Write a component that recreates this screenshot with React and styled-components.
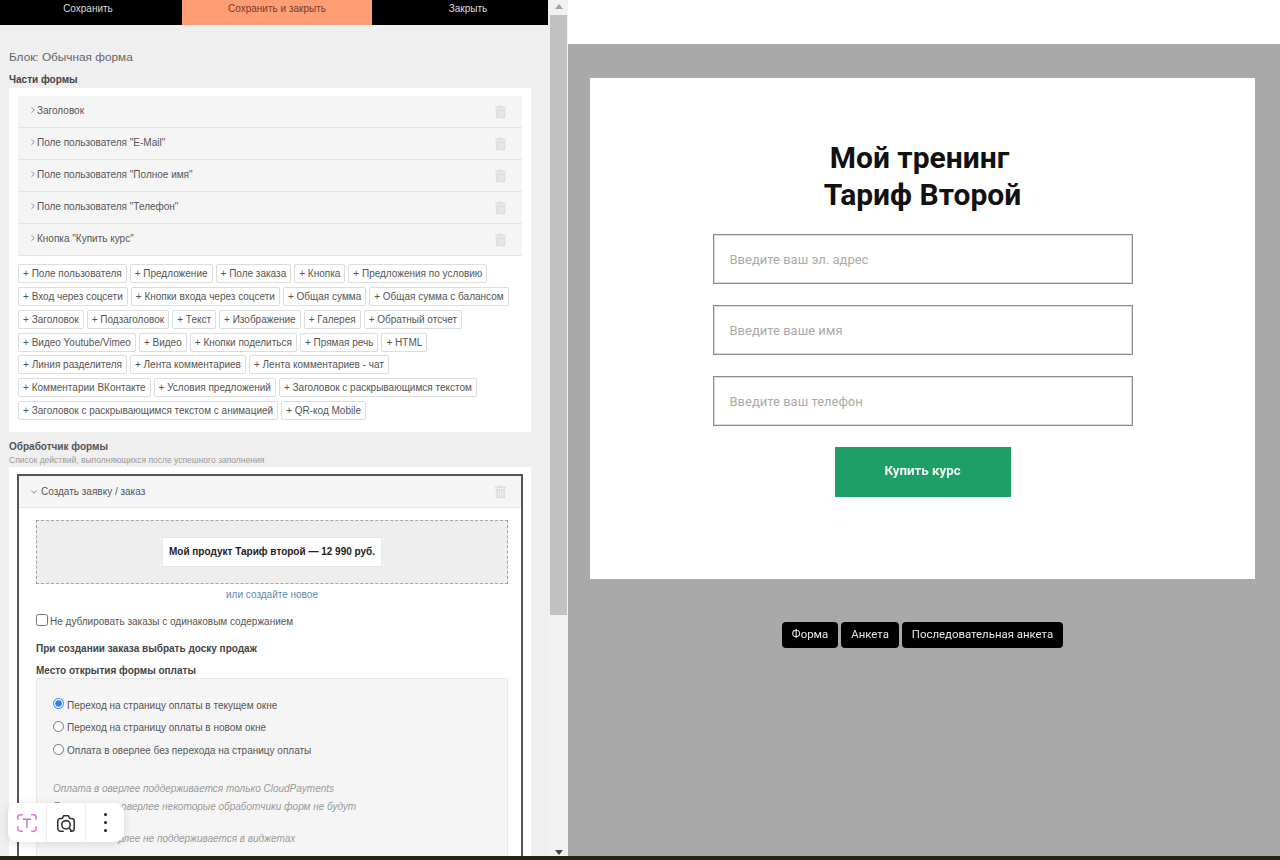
import React from 'react';
import styled, { createGlobalStyle } from 'styled-components';
import { FaTrashAlt } from 'react-icons/fa';
import { LuChevronRight, LuChevronDown } from 'react-icons/lu';

const GlobalStyle = createGlobalStyle`
    html, body {
        margin: 0;
        padding: 0;
        height: 860px;
        overflow: hidden;
        background: #2a2117;
    }
    * {
        box-sizing: border-box;
    }
`;

const parts = ['Заголовок', 'Поле пользователя "E-Mail"', 'Поле пользователя "Полное имя"', 'Поле пользователя "Телефон"', 'Кнопка "Купить курс"'];

const tags = [
    'Поле пользователя', 'Предложение', 'Поле заказа', 'Кнопка', 'Предложения по условию',
    'Вход через соцсети', 'Кнопки входа через соцсети', 'Общая сумма', 'Общая сумма с балансом',
    'Заголовок', 'Подзаголовок', 'Текст', 'Изображение', 'Галерея', 'Обратный отсчет',
    'Видео Youtube/Vimeo', 'Видео', 'Кнопки поделиться', 'Прямая речь', 'HTML',
    'Линия разделителя', 'Лента комментариев', 'Лента комментариев - чат',
    'Комментарии ВКонтакте', 'Условия предложений', 'Заголовок с раскрывающимся текстом',
    'Заголовок с раскрывающимся текстом с анимацией', 'QR-код Mobile',
];

const App = () => {
    return (
        <Page>
            <GlobalStyle />
            <Main>
                <Editor>
                    <Toolbar>
                        <ToolButton $right={6}>Сохранить</ToolButton>
                        <ToolButton $active>Сохранить и закрыть</ToolButton>
                        <ToolButton $left={16}>Закрыть</ToolButton>
                    </Toolbar>

                    <BlockTitle>Блок: Обычная форма</BlockTitle>
                    <SectionTitle>Части формы</SectionTitle>
                    <Panel>
                        {parts.map((part) => (
                            <PartRow key={part}>
                                <RightArrow size={10} />
                                <PartName>{part}</PartName>
                                <Trash />
                            </PartRow>
                        ))}
                        <TagList>
                            {tags.map((tag) => (
                                <Tag key={tag}>+ {tag}</Tag>
                            ))}
                        </TagList>
                    </Panel>

                    <HandlerTitle>Обработчик формы</HandlerTitle>
                    <HandlerNote>Список действий, выполняющихся после успешного заполнения</HandlerNote>
                    <HandlerPanel>
                        <HandlerCard>
                            <CardHeader>
                                <DownArrow size={10} />
                                <CardName>Создать заявку / заказ</CardName>
                                <Trash />
                            </CardHeader>
                            <CardBody>
                                <DropZone>
                                    <ProductChip>Мой продукт Тариф второй — 12 990 руб.</ProductChip>
                                </DropZone>
                                <CreateLink>или создайте новое</CreateLink>
                                <CheckRow>
                                    <CheckBox type="checkbox" />
                                    Не дублировать заказы с одинаковым содержанием
                                </CheckRow>
                                <BoldLabel $top={15}>При создании заказа выбрать доску продаж</BoldLabel>
                                <BoldLabel $top={10}>Место открытия формы оплаты</BoldLabel>
                                <OptionsBox>
                                    <RadioRow>
                                        <Radio type="radio" name="pay" defaultChecked />
                                        Переход на страницу оплаты в текущем окне
                                    </RadioRow>
                                    <RadioRow>
                                        <Radio type="radio" name="pay" />
                                        Переход на страницу оплаты в новом окне
                                    </RadioRow>
                                    <RadioRow>
                                        <Radio type="radio" name="pay" />
                                        Оплата в оверлее без перехода на страницу оплаты
                                    </RadioRow>
                                    <Notes>
                                        <Note>Оплата в оверлее поддерживается только CloudPayments</Note>
                                        <Note>При оплате в оверлее некоторые обработчики форм не будут работать ⓘ</Note>
                                        <Note>Оплата в оверлее не поддерживается в виджетах</Note>
                                    </Notes>
                                </OptionsBox>
                            </CardBody>
                        </HandlerCard>
                    </HandlerPanel>

                    <FloatBar>
                        <FloatCell>
                            <svg width="22" height="22" viewBox="0 0 24 24" fill="none" stroke="#f06fd8" strokeWidth="1.6" strokeLinecap="round">
                                <path d="M7 3H5a3 3 0 0 0-3 3v2M17 3h2a3 3 0 0 1 3 3v2M7 21H5a3 3 0 0 1-3-3v-2M17 21h2a3 3 0 0 0 3-3v-2" />
                                <path d="M8 8h8M12 8v9" stroke="#c06fe0" />
                            </svg>
                        </FloatCell>
                        <FloatCell>
                            <svg width="22" height="22" viewBox="0 0 24 24" fill="none" stroke="#333" strokeWidth="1.7" strokeLinecap="round" strokeLinejoin="round">
                                <path d="M9 21H6a3 3 0 0 1-3-3v-8a3 3 0 0 1 3-3h2l1.5-3h5L16 7h2a3 3 0 0 1 3 3v8a3 3 0 0 1-3 3h-1" />
                                <circle cx="12" cy="14" r="4.6" />
                                <path d="M15.5 17.5L18 21" />
                            </svg>
                        </FloatCell>
                        <FloatCell>
                            <Dots>
                                <i />
                                <i />
                                <i />
                            </Dots>
                        </FloatCell>
                    </FloatBar>
                </Editor>

                <ScrollBar>
                    <ScrollArrow />
                    <ScrollThumb />
                    <ScrollArrow $down />
                </ScrollBar>

                <Preview>
                    <PreviewTop />
                    <PreviewStage>
                        <FormCard>
                            <FormTitle>
                                <TitleFirstLine>Мой тренинг</TitleFirstLine>
                                <br />
                                Тариф Второй
                            </FormTitle>
                            <FormInput placeholder="Введите ваш эл. адрес" />
                            <FormInput placeholder="Введите ваше имя" />
                            <FormInput placeholder="Введите ваш телефон" />
                            <BuyButton>Купить курс</BuyButton>
                        </FormCard>
                        <ModeTabs>
                            <ModeTab>Форма</ModeTab>
                            <ModeTab>Анкета</ModeTab>
                            <ModeTab>Последовательная анкета</ModeTab>
                        </ModeTabs>
                    </PreviewStage>
                </Preview>
            </Main>
            <BottomStrip />
        </Page>
    );
};

const Page = styled.div`
    width: 1280px;
    height: 860px;
    display: flex;
    flex-direction: column;
    font-family: "Liberation Sans", Arial, sans-serif;
    filter: blur(0.4px);
`;

const Main = styled.div`
    height: 856px;
    display: flex;
`;

const BottomStrip = styled.div`
    height: 4px;
    background: #2a2117;
`;

const Editor = styled.div`
    position: relative;
    width: 549px;
    height: 856px;
    overflow: hidden;
    background: #efefef;
    color: #444;
`;

const Toolbar = styled.div`
    display: grid;
    grid-template-columns: 182px 190px 1fr;
    height: 25px;
    margin-right: 1px;
    background: #000;
`;

const ToolButton = styled.div`
    display: flex;
    align-items: center;
    justify-content: center;
    padding-bottom: 8px;
    padding-right: ${(props) => props.$right || 0}px;
    padding-left: ${(props) => props.$left || 0}px;
    font-size: 10px;
    background: ${(props) => (props.$active ? '#ff9e75' : '#000')};
    color: ${(props) => (props.$active ? '#7a3a22' : '#ddd')};
`;

const BlockTitle = styled.div`
    margin: 25px 0 0 9px;
    font-size: 11.8px;
    line-height: 14px;
    color: #666;
`;

const SectionTitle = styled.div`
    margin: 10px 0 0 9px;
    font-size: 10px;
    line-height: 12px;
    font-weight: bold;
    color: #444;
`;

const Panel = styled.div`
    margin: 2px 18px 0 9px;
    padding: 8px 9px 12.1px;
    background: #fff;
`;

const PartRow = styled.div`
    display: flex;
    align-items: center;
    height: 32px;
    padding: 0 16px 0 10px;
    background: #f5f5f5;
    border-bottom: 1px solid #e4e4e4;
`;

const RightArrow = styled(LuChevronRight)`
    flex: none;
    margin: -3px -1px 0 0;
    color: #777;
`;

const DownArrow = styled(LuChevronDown)`
    flex: none;
    margin: 0 2px 0 0;
    color: #777;
`;

const PartName = styled.span`
    flex: 1;
    margin-top: -2px;
    font-size: 10px;
    color: #555;
`;

const CardName = styled(PartName)`
    margin-top: 0;
`;

const Trash = styled(FaTrashAlt)`
    flex: none;
    width: 11px;
    height: 14px;
    color: #dedede;
`;

const TagList = styled.div`
    display: flex;
    flex-wrap: wrap;
    gap: 3.85px 3px;
    margin-top: 8px;
`;

const Tag = styled.div`
    height: 19px;
    padding: 0 4px;
    line-height: 17px;
    font-size: 10px;
    white-space: nowrap;
    color: #555;
    background: #fff;
    border: 1px solid #ddd;
    border-radius: 2px;
`;

const HandlerTitle = styled.div`
    margin: 9px 0 0 9px;
    font-size: 10px;
    line-height: 12px;
    font-weight: bold;
    color: #555;
`;

const HandlerNote = styled.div`
    margin: 2px 0 0 9px;
    font-size: 8.5px;
    line-height: 10px;
    color: #999;
`;

const HandlerPanel = styled.div`
    margin: 2px 18px 0 9px;
    padding: 7px 8px 0;
    background: #fff;
`;

const HandlerCard = styled.div`
    border: 2px solid #555;
`;

const CardHeader = styled.div`
    display: flex;
    align-items: center;
    height: 32px;
    padding: 0 15px 0 10px;
    background: #f5f5f5;
    border-bottom: 1px solid #e4e4e4;
`;

const CardBody = styled.div`
    padding: 12px 13px 0 17px;
`;

const DropZone = styled.div`
    display: flex;
    align-items: center;
    justify-content: center;
    height: 64px;
    background: #eee;
    border: 1px dashed #a5a5a5;
`;

const ProductChip = styled.div`
    display: flex;
    align-items: center;
    height: 28px;
    padding: 0 6px 2px;
    background: #fff;
    box-shadow: 0 0 0 1px #e6e6e6;
    font-size: 10px;
    font-weight: bold;
    color: #222;
`;

const CreateLink = styled.div`
    margin-top: 5px;
    line-height: 12px;
    font-size: 10px;
    text-align: center;
    color: #5b8db0;
`;

const CheckRow = styled.label`
    display: flex;
    align-items: center;
    height: 14px;
    margin-top: 13px;
    font-size: 10px;
    color: #555;
`;

const CheckBox = styled.input`
    width: 12px;
    height: 12px;
    margin: -3px 2px 0 0;
    accent-color: #2f7fe0;
`;

const BoldLabel = styled.div`
    margin-top: ${(props) => props.$top}px;
    line-height: 12px;
    font-size: 10px;
    font-weight: bold;
    color: #444;
`;

const OptionsBox = styled.div`
    margin-top: 1px;
    height: 400px;
    padding: 19px 16px 0;
    background: #f5f5f5;
    border: 1px solid #e8e8e8;
    border-radius: 3px;
`;

const RadioRow = styled.label`
    display: flex;
    align-items: center;
    height: 14px;
    margin-bottom: 8.7px;
    font-size: 10px;
    color: #555;
`;

const Radio = styled.input`
    width: 11px;
    height: 11px;
    margin: -3px 3px 0 0;
    accent-color: #2f7fe0;
`;

const Notes = styled.div`
    margin-top: 24px;
    width: 320px;
`;

const Note = styled.p`
    margin: 0 0 4px;
    line-height: 14px;
    font-size: 10px;
    font-style: italic;
    color: #999;
`;

const FloatBar = styled.div`
    position: absolute;
    left: 8px;
    top: 803px;
    display: flex;
    width: 116px;
    height: 39px;
    background: #fff;
    border-radius: 9px;
    box-shadow: 0 2px 10px rgba(0, 0, 0, 0.12);
`;

const FloatCell = styled.div`
    display: flex;
    align-items: center;
    justify-content: center;
    flex: 1;
    & + & {
        border-left: 1px solid #eee;
    }
`;

const Dots = styled.div`
    display: flex;
    flex-direction: column;
    gap: 5px;
    i {
        width: 3px;
        height: 3px;
        border-radius: 50%;
        background: #222;
    }
`;

const ScrollBar = styled.div`
    display: flex;
    flex-direction: column;
    align-items: center;
    width: 19px;
    height: 856px;
    background: #f1f1f1;
`;

const ScrollArrow = styled.div`
    flex: none;
    width: 0;
    height: 0;
    margin: ${(props) => (props.$down ? '0 0 1px' : '4px 0 5px')};
    border-left: 4px solid transparent;
    border-right: 4px solid transparent;
    ${(props) => (props.$down ? 'border-top: 5px solid #444;' : 'border-bottom: 5px solid #a3a3a3;')}
`;

const ScrollThumb = styled.div`
    flex: none;
    width: 17px;
    height: 600px;
    margin-top: 1px;
    margin-bottom: auto;
    background: #c1c1c1;
`;

const Preview = styled.div`
    flex: 1;
    display: flex;
    flex-direction: column;
`;

const PreviewTop = styled.div`
    height: 44px;
    background: #fff;
`;

const PreviewStage = styled.div`
    flex: 1;
    padding: 34px 0 0 22px;
    background: #a9a9a9;
`;

const FormCard = styled.div`
    display: flex;
    flex-direction: column;
    align-items: center;
    width: 665px;
    height: 501px;
    padding-top: 61px;
    background: #fff;
`;

const FormTitle = styled.h1`
    margin: 0 0 21px;
    font-family: Roboto, sans-serif;
    font-size: 30px;
    line-height: 37px;
    font-weight: 700;
    text-align: center;
    color: #111;
`;

const TitleFirstLine = styled.span`
    padding-right: 6px;
`;

const FormInput = styled.input`
    width: 420px;
    height: 50px;
    flex: none;
    margin-bottom: 21px;
    padding: 0 16px;
    font-family: Roboto, sans-serif;
    font-size: 13px;
    background: #fff;
    border: 1px solid #8c8c8c;
    box-shadow: inset 0 0 0 1px #dcdcdc;
    border-radius: 0;
    outline: none;
    &::placeholder {
        color: #aaa;
    }
`;

const BuyButton = styled.button`
    width: 176px;
    height: 50px;
    flex: none;
    padding: 0 0 3px;
    font-family: Roboto, sans-serif;
    font-size: 13.3px;
    font-weight: 700;
    color: #f2f2f2;
    background: #1d9f67;
    border: none;
`;

const ModeTabs = styled.div`
    display: flex;
    justify-content: center;
    gap: 3px;
    width: 665px;
    margin-top: 43px;
`;

const ModeTab = styled.div`
    height: 26px;
    padding: 0 10px;
    line-height: 25px;
    font-family: Roboto, sans-serif;
    font-size: 11.4px;
    color: #e8e8e8;
    background: #000;
    border-radius: 4px;
`;

export default App;
